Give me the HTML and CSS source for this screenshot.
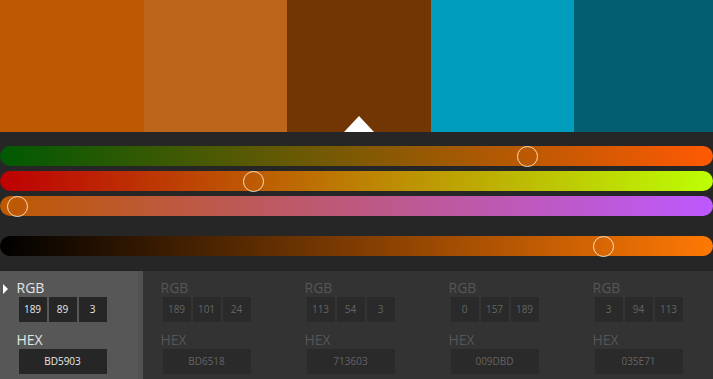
FILE: index.html
```html
<!DOCTYPE html>
<html>
<head>
<meta charset="utf-8">
<link rel="stylesheet" href="styles.css">
</head>
<body>
<div class="app">
  <div class="swatches">
    <div class="swatch" style="background:#BD5903"></div>
    <div class="swatch" style="background:#BD6518"></div>
    <div class="swatch active" style="background:#713603"><span class="pointer"></span></div>
    <div class="swatch" style="background:#009DBD"></div>
    <div class="swatch" style="background:#035E71"></div>
  </div>
  <div class="sliders">
    <div class="track t-red"><span class="thumb" style="left:517px"></span></div>
    <div class="track t-green"><span class="thumb" style="left:243px"></span></div>
    <div class="track t-blue"><span class="thumb" style="left:7px"></span></div>
    <div class="track t-bright spaced"><span class="thumb" style="left:593px"></span></div>
  </div>
  <div class="panel">
    <div class="col selected">
      <span class="marker"></span>
      <div class="label">RGB</div>
      <div class="boxes"><span class="box">189</span><span class="box">89</span><span class="box">3</span></div>
      <div class="label hex">HEX</div>
      <div class="box wide">BD5903</div>
    </div>
    <div class="col">
      <div class="label">RGB</div>
      <div class="boxes"><span class="box">189</span><span class="box">101</span><span class="box">24</span></div>
      <div class="label hex">HEX</div>
      <div class="box wide">BD6518</div>
    </div>
    <div class="col">
      <div class="label">RGB</div>
      <div class="boxes"><span class="box">113</span><span class="box">54</span><span class="box">3</span></div>
      <div class="label hex">HEX</div>
      <div class="box wide">713603</div>
    </div>
    <div class="col">
      <div class="label">RGB</div>
      <div class="boxes"><span class="box">0</span><span class="box">157</span><span class="box">189</span></div>
      <div class="label hex">HEX</div>
      <div class="box wide">009DBD</div>
    </div>
    <div class="col">
      <div class="label">RGB</div>
      <div class="boxes"><span class="box">3</span><span class="box">94</span><span class="box">113</span></div>
      <div class="label hex">HEX</div>
      <div class="box wide">035E71</div>
    </div>
  </div>
</div>
</body>
</html>
```

FILE: styles.css
```css
html, body {
  margin: 0;
  padding: 0;
}
body {
  background: #262626;
  font-family: "Open Sans", "Noto Sans", sans-serif;
  width: 713px;
  height: 379px;
  overflow: hidden;
}
.app {
  width: 713px;
  height: 379px;
  display: flex;
  flex-direction: column;
  overflow: hidden;
}
.swatches {
  display: flex;
  height: 132px;
  flex: 0 0 132px;
}
.swatch {
  flex: 0 0 143.5px;
  position: relative;
}
.pointer {
  position: absolute;
  left: 50%;
  bottom: 0;
  margin-left: -15px;
  width: 0;
  height: 0;
  border-left: 15px solid transparent;
  border-right: 15px solid transparent;
  border-bottom: 16px solid #ffffff;
}
.sliders {
  flex: 0 0 auto;
  padding: 14px 0 14px;
  display: flex;
  flex-direction: column;
  gap: 5px;
}
.track {
  position: relative;
  height: 20px;
  border-radius: 10px;
}
.track.spaced {
  margin-top: 15px;
}
.t-red { background: linear-gradient(to right, rgb(0,89,3), rgb(255,89,3)); }
.t-green { background: linear-gradient(to right, rgb(189,0,3), rgb(189,255,3)); }
.t-blue { background: linear-gradient(to right, rgb(189,89,0), rgb(189,89,255)); }
.t-bright { background: linear-gradient(to right, #000000, rgb(255,121,4)); }
.thumb {
  position: absolute;
  top: -0.5px;
  width: 21px;
  height: 21px;
  border: 1.5px solid rgba(255, 236, 210, 0.9);
  border-radius: 50%;
  box-sizing: border-box;
}
.panel {
  flex: 1 1 auto;
  display: flex;
  background: #333333;
  border-top: 1px solid #222222;
}
.col {
  flex: 0 0 144px;
  box-sizing: border-box;
  padding: 9px 0 0 18.5px;
  position: relative;
  color: #565656;
}
.col.selected {
  background: #575757;
  border-right: 5px solid #525252;
  flex-basis: 143px;
  margin-right: 1px;
  color: #e4e4e4;
}
.marker {
  position: absolute;
  left: 3px;
  top: 13px;
  width: 0;
  height: 0;
  border-top: 5px solid transparent;
  border-bottom: 5px solid transparent;
  border-left: 5px solid #ffffff;
}
.label {
  font-size: 14px;
  line-height: 16px;
  height: 16px;
  margin-left: -2px;
}
.label.hex {
  margin-top: 10px;
}
.boxes {
  display: flex;
  gap: 2px;
  margin-top: 1px;
}
.box {
  display: block;
  width: 28px;
  height: 25px;
  line-height: 25px;
  text-align: center;
  font-size: 10px;
  background: #2a2a2a;
  color: #646464;
}
.box.wide {
  width: 88px;
  margin-top: 1px;
}
.selected .box {
  background: #262626;
  color: #e8e8e8;
}
```
